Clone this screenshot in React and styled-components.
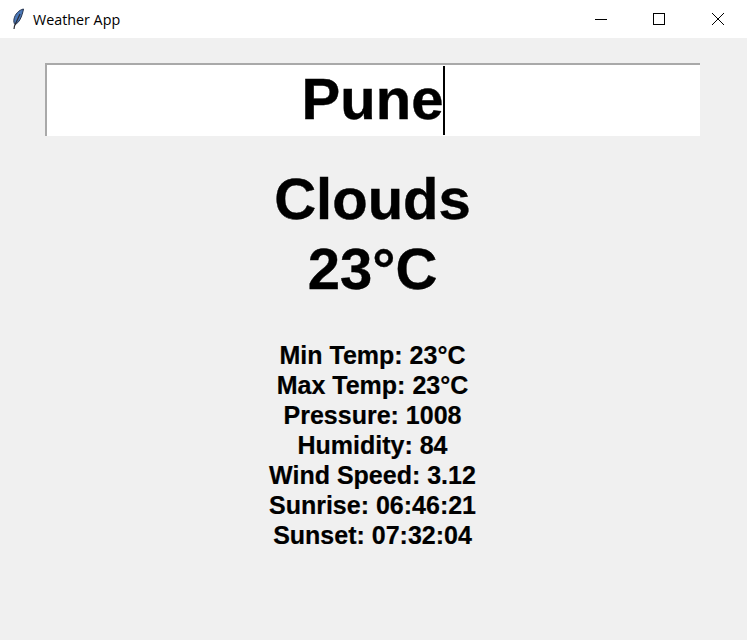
import React from "react";
import styled, {createGlobalStyle} from "styled-components";

const GlobalStyle = createGlobalStyle`
  html, body {
    margin: 0;
    padding: 0;
    background: #f0f0f0;
  }
  body {
    font-family: "Liberation Sans", Arial, sans-serif;
  }
`;

const Window = styled.div`
  width: 747px;
  height: 640px;
  display: flex;
  flex-direction: column;
  overflow: hidden;
`;

const TitleBar = styled.div`
  height: 38px;
  background: #fff;
  display: flex;
  align-items: center;
  justify-content: space-between;
`;

const TitleLeft = styled.div`
  display: flex;
  align-items: center;
  padding-left: 11px;
  gap: 8px;
`;

const TitleText = styled.span`
  font-family: "Open Sans", "Noto Sans", sans-serif;
  font-size: 14.3px;
  color: #000;
`;

const WindowButtons = styled.div`
  display: flex;
`;

const WindowButton = styled.div`
  width: 58px;
  height: 38px;
  display: flex;
  align-items: center;
  justify-content: center;

  &:nth-child(2) {
    margin-right: 1px;
  }
`;

const Content = styled.main`
  flex: 1;
  display: flex;
  flex-direction: column;
  align-items: center;
  padding: 25px 2px 0 0;
`;

const SearchBox = styled.div`
  width: 655px;
  height: 73px;
  box-sizing: border-box;
  background: #fff;
  border-top: 2px solid #a9a9a9;
  border-left: 2px solid #a9a9a9;
  display: flex;
  justify-content: center;
  align-items: center;
`;

const SearchText = styled.span`
  font-size: 58px;
  font-weight: 700;
  line-height: 71px;
  color: #000;
  -webkit-text-stroke: 0.4px #000;
  position: relative;
  top: -2px;
`;

const Caret = styled.span`
  display: inline-block;
  width: 2px;
  height: 69px;
  background: #000;
`;

const Headline = styled.div`
  font-size: 58px;
  font-weight: 700;
  line-height: 70px;
  color: #000;
  -webkit-text-stroke: 0.4px #000;
  text-align: center;
`;

const HeadlineGroup = styled.div`
  margin-top: 28px;
`;

const Details = styled.div`
  margin-top: 36px;
`;

const DetailRow = styled.div`
  font-size: 25px;
  font-weight: 700;
  line-height: 30px;
  color: #000;
  -webkit-text-stroke: 0.2px #000;
  text-align: center;
`;

const FeatherIcon = () => (
  <svg width="14" height="22" viewBox="0 0 14 22">
    <path d="M12.5 1 C8 2 4 6 3 11 C2.5 13.5 3 15.5 4 16.5 C8 15 11 9 12.5 1Z" fill="#4a78b8" stroke="#26344f" strokeWidth="1" />
    <path d="M9 6 L3.5 18 L3 21" fill="none" stroke="#2b2b33" strokeWidth="1.2" />
  </svg>
);

const details = [
  "Min Temp: 23°C",
  "Max Temp: 23°C",
  "Pressure: 1008",
  "Humidity: 84",
  "Wind Speed: 3.12",
  "Sunrise: 06:46:21",
  "Sunset: 07:32:04",
];

const App = () => {
  return (
    <Window>
      <GlobalStyle />
      <TitleBar>
        <TitleLeft>
          <FeatherIcon />
          <TitleText>Weather App</TitleText>
        </TitleLeft>
        <WindowButtons>
          <WindowButton>
            <svg width="12" height="12" viewBox="0 0 12 12">
              <path d="M0 6.5H12" stroke="#000" strokeWidth="1" />
            </svg>
          </WindowButton>
          <WindowButton>
            <svg width="12" height="12" viewBox="0 0 12 12">
              <rect x="0.5" y="0.5" width="11" height="11" fill="none" stroke="#000" strokeWidth="1" />
            </svg>
          </WindowButton>
          <WindowButton>
            <svg width="12" height="12" viewBox="0 0 12 12">
              <path d="M0 0L12 12M12 0L0 12" stroke="#000" strokeWidth="1" />
            </svg>
          </WindowButton>
        </WindowButtons>
      </TitleBar>
      <Content>
        <SearchBox>
          <SearchText>Pune</SearchText>
          <Caret />
        </SearchBox>
        <HeadlineGroup>
          <Headline>Clouds</Headline>
          <Headline>23°C</Headline>
        </HeadlineGroup>
        <Details>
          {details.map((line) => (
            <DetailRow key={line}>{line}</DetailRow>
          ))}
        </Details>
      </Content>
    </Window>
  );
};

export default App;
